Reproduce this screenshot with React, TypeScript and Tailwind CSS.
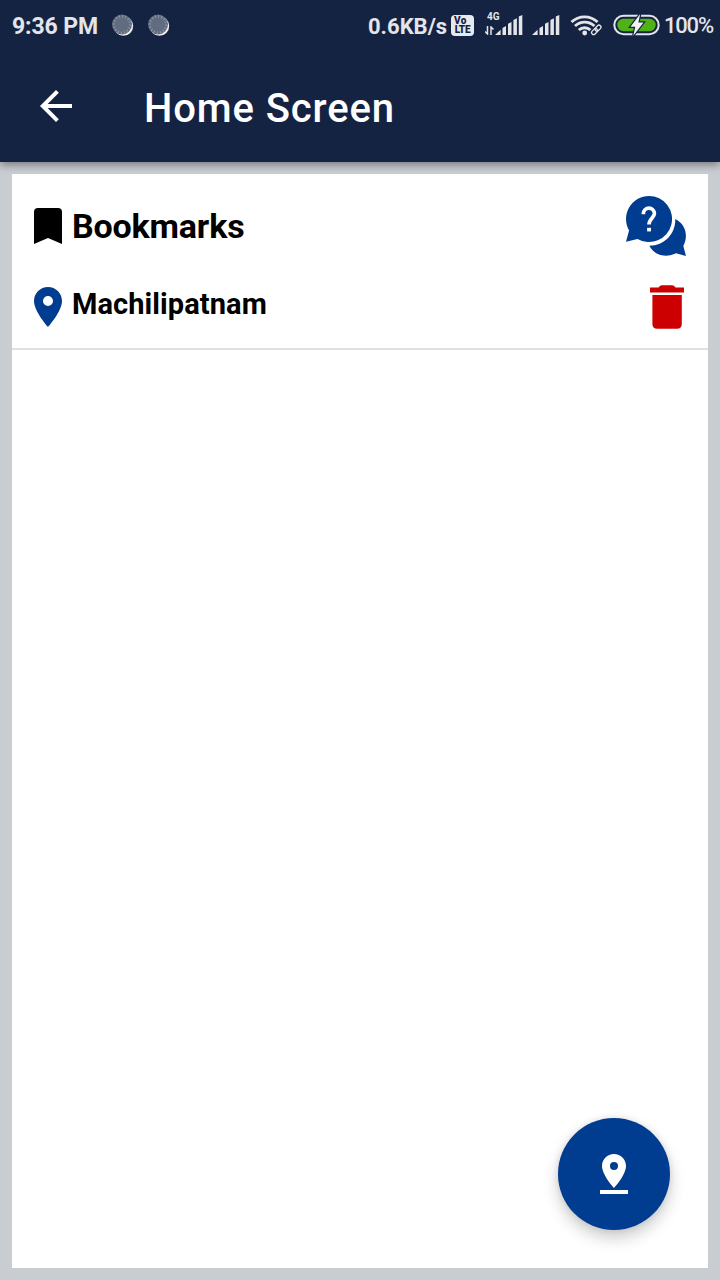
import React from "react";

function BadgeDot() {
  return (
    <svg className="block h-[24px] w-[24px]" viewBox="0 0 24 24">
      <circle cx="12.4" cy="12" r="9.8" fill="#f1f1f1" />
      <circle cx="11" cy="10.5" r="10" fill="#626c80" />
      <circle cx="11" cy="10.5" r="8.2" fill="none" stroke="#8b93a2" strokeWidth="2.4" strokeDasharray="1.2 2" />
    </svg>
  );
}

function Volte() {
  return (
    <div className="flex h-[21px] w-[23px] flex-col items-center justify-start rounded-[4px] bg-[#e8e9ec] pt-[1px] text-[10px] leading-[9px] font-black text-[#152342]">
      <span className="w-full pl-[3px] tracking-[0.3px]">Vo</span>
      <span className="tracking-[-0.2px]">LTE</span>
    </div>
  );
}

function Bars() {
  return (
    <svg className="block h-[20px] w-[28px]" viewBox="0 0 28 20" fill="#e3e5e9">
      <path d="M0 20L5.6 14.8V20ZM7.5 13L11 11V20H7.5ZM13 8.8L16.5 7V20H13ZM18.4 5L21.9 3.3V20H18.4ZM23.8 1.5L27.3 0V20H23.8Z" />
    </svg>
  );
}

function Wifi() {
  return (
    <svg className="block h-[24px] w-[34px]" viewBox="0 0 34 24" fill="none" stroke="#e3e5e9">
      <path d="M1.5 8A19 19 0 0 1 27.6 8M5 12.1A14 14 0 0 1 24.4 12.1M8.8 16A8.6 8.6 0 0 1 20.4 16" strokeWidth="2.8" />
      <circle cx="14.7" cy="19" r="2.4" fill="#e3e5e9" stroke="none" />
      <g transform="rotate(-45 27 16)" strokeWidth="1.3">
        <rect x="20.8" y="13.4" width="6.8" height="4" rx="2" />
        <rect x="25.6" y="13.4" width="6.8" height="4" rx="2" />
      </g>
    </svg>
  );
}

function Battery() {
  return (
    <svg className="block h-[22px] w-[47px]" viewBox="0 0 47 22">
      <rect x="1.3" y="1.8" width="44.4" height="18.4" rx="9.2" fill="none" stroke="#e3e5e9" strokeWidth="2" />
      <rect x="4.3" y="4.8" width="38.4" height="12.4" rx="6.2" fill="#50b218" />
      <path d="M27.2 0L17.5 12.7H22.3L20.3 21.7L30.5 8.5H25.4Z" fill="#f2f4f3" stroke="#152342" strokeWidth="2.4" paintOrder="stroke" />
    </svg>
  );
}

function StatusBar() {
  return (
    <div className="flex h-[50px] items-start text-[#e3e5e9]">
      <div className="w-[98px] pt-[13px] pl-[12px] text-[23px] leading-[28px] font-bold whitespace-nowrap">
        <span className="tracking-[-0.1px]">9:36 PM</span>
      </div>
      <div className="ml-[13px] flex gap-[12px] pt-[14px]">
        <BadgeDot />
        <BadgeDot />
      </div>
      <div className="ml-auto flex items-start">
        <span className="w-[83px] pt-[13px] text-[22px] leading-[28px] font-bold whitespace-nowrap">0.6KB/s</span>
        <div className="pt-[15px]">
          <Volte />
        </div>
        <div className="ml-[11px] flex w-[38px] flex-col">
          <span className="h-[15px] pt-[11px] pl-[2px] text-[10px] leading-[12px] font-bold">4G</span>
          <div className="flex">
            <svg className="mt-[11px] block h-[9px] w-[10px]" viewBox="0 0 10 9" fill="none" stroke="#e3e5e9" strokeWidth="1.5">
              <path d="M2.5 0V8L0 5.5M6 9V1L8.5 3.5" />
            </svg>
            <Bars />
          </div>
        </div>
        <div className="ml-[9px] pt-[15px]">
          <Bars />
        </div>
        <div className="ml-[10px] pt-[14px]">
          <Wifi />
        </div>
        <div className="ml-[9px] pt-[14px]">
          <Battery />
        </div>
        <span className="ml-[4px] w-[56px] pt-[12px] text-[22px] leading-[28px] font-medium tracking-[-1.2px] whitespace-nowrap">100%</span>
      </div>
    </div>
  );
}

export default function App() {
  return (
    <div className="flex h-[1280px] w-[720px] flex-col overflow-hidden bg-[#c9ccd1] font-['Roboto',sans-serif]">
      <header className="z-10 h-[162px] shrink-0 bg-[#152342] shadow-[0_3px_8px_rgba(0,0,0,0.4)]">
        <StatusBar />
        <div className="flex h-[112px] items-center pl-[40px]">
          <svg className="block h-[32px] w-[32px]" viewBox="4 4 16 16" fill="#fff">
            <path d="M20 11H7.83l5.59-5.59L12 4l-8 8 8 8 1.41-1.41L7.83 13H20v-2z" />
          </svg>
          <h1 className="mt-[5px] ml-[72px] text-[40px] leading-[48px] font-medium tracking-[0.88px] whitespace-nowrap text-white">Home Screen</h1>
        </div>
      </header>
      <main className="m-3 flex flex-1 flex-col bg-white">
        <div className="flex h-[104px] items-start pr-[22px] pl-[22px]">
          <svg className="mt-[34px] block h-[36px] w-[28px]" viewBox="0 0 28 36">
            <path d="M4 0H24Q28 0 28 4V36L14 30L0 36V4Q0 0 4 0Z" />
          </svg>
          <h2 className="mt-[32px] ml-[10px] text-[34px] leading-[40px] font-bold tracking-[-0.17px] whitespace-nowrap text-black">Bookmarks</h2>
          <svg className="mt-[22px] ml-auto block h-[60px] w-[60px]" viewBox="0 0 60 60" fill="#003c8f">
            <path d="M23 0A23 23 0 1 1 11.5 42.9L0 45.8L3.1 34.5A23 23 0 0 1 23 0Z" />
            <path d="M49.3 23C60 28.5 62.5 40 57.3 50L60 60L50 57.3C40 62.3 28.3 59.5 23.3 49.7C38 50 49.7 38 49.3 23Z" />
            <path d="M17.4 18.3V17.6A5.4 5.4 0 0 1 28.4 17.6C28.4 21.8 23 22.4 23 28.6" fill="none" stroke="#fff" strokeWidth="3.7" />
            <rect x="21.1" y="31.8" width="3.9" height="3.6" fill="#fff" />
          </svg>
        </div>
        <div className="flex h-[72px] items-start border-b-2 border-[#e0e0e0] pr-[24px] pl-[22px]">
          <svg className="mt-[9px] block h-[40px] w-[28px]" viewBox="5 2 14 20" fill="#003c8f">
            <path d="M12 2C8.13 2 5 5.13 5 9c0 5.25 7 13 7 13s7-7.75 7-13c0-3.87-3.13-7-7-7zm0 9.5a2.5 2.5 0 1 1 0-5 2.5 2.5 0 0 1 0 5z" />
          </svg>
          <span className="mt-[8px] ml-[10px] text-[29px] leading-[36px] font-bold tracking-[0.08px] whitespace-nowrap text-black">Machilipatnam</span>
          <svg className="mt-[7px] ml-auto block h-[44px] w-[34px]" viewBox="0 0 34 44" fill="#cc0000">
            <path d="M0 2.4H8.5Q10 0.3 12 0.3H22Q24 0.3 25.5 2.4H34V7.5H0ZM2.4 10H31.8V39Q31.8 43.8 27 43.8H7.2Q2.4 43.8 2.4 39Z" />
          </svg>
        </div>
        <button className="mt-auto mr-[38px] mb-[38px] flex h-[112px] w-[112px] items-center justify-center self-end rounded-full bg-[#003c8f] shadow-[0_8px_16px_rgba(0,0,0,0.2),0_0_6px_rgba(0,0,0,0.1)]">
          <svg className="block h-[40px] w-[28px]" viewBox="5 2 14 20" fill="#fff">
            <path d="M18 8c0-3.31-2.69-6-6-6S6 4.69 6 8c0 4.5 6 11 6 11s6-6.5 6-11zm-8 0a2 2 0 1 1 4 0 2 2 0 0 1-4 0zM5 20v2h14v-2H5z" />
          </svg>
        </button>
      </main>
    </div>
  );
}
